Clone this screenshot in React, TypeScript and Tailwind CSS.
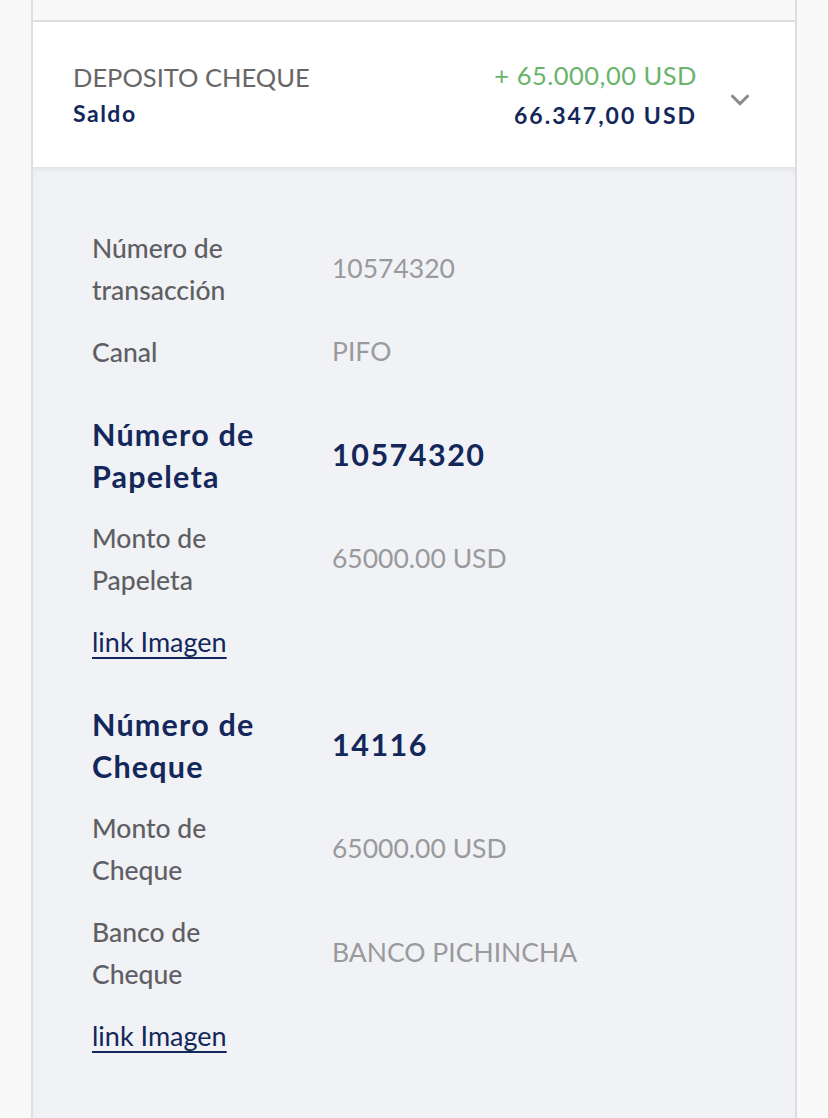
import { ChevronDown } from "lucide-react";

type Row = {
  label: string[];
  value: string;
  strong?: boolean;
  link?: boolean;
};

const rows: Row[] = [
  { label: ["Número de", "transacción"], value: "10574320" },
  { label: ["Canal"], value: "PIFO" },
  { label: ["Número de", "Papeleta"], value: "10574320", strong: true },
  { label: ["Monto de", "Papeleta"], value: "65000.00 USD" },
  { label: ["link Imagen"], value: "", link: true },
  { label: ["Número de", "Cheque"], value: "14116", strong: true },
  { label: ["Monto de", "Cheque"], value: "65000.00 USD" },
  { label: ["Banco de", "Cheque"], value: "BANCO PICHINCHA" },
  { label: ["link Imagen"], value: "", link: true },
];

export default function App() {
  return (
    <div className="min-h-[1118px] bg-[#f9f9f9] font-['Lato','Liberation_Sans',sans-serif]">
      <div className="mx-[31px] flex min-h-[1118px] flex-col border-x-2 border-[#dedede]">
        {/* previous item, cut off */}
        <div className="h-[22px] border-b-2 border-[#dedede] bg-[#f9f9f9]" />

        {/* header */}
        <div className="flex h-[145px] items-center bg-white pl-[40px] pr-[40px]">
          <div className="flex-1">
            <div className="text-[25.5px] leading-[36px] text-[#666666]">DEPOSITO CHEQUE</div>
            <div className="text-[23px] font-bold leading-[36px] tracking-[1.5px] text-[#13275a]">Saldo</div>
          </div>
          <div className="text-right">
            <div className="text-[25.5px] leading-[36px] tracking-[0.5px] text-[#68b46a]">+ 65.000,00 USD</div>
            <div className="mt-[4px] text-[23px] font-bold leading-[36px] tracking-[2px] text-[#13275a]">66.347,00 USD</div>
          </div>
          <ChevronDown className="ml-[28px] mt-[10px] text-[#8a8a8a]" size={30} strokeWidth={2.5} />
        </div>

        {/* details */}
        <div className="flex-1 bg-[#f0f2f6] pl-[59px] pr-[40px] pt-[60px] pb-[40px] shadow-[inset_0_6px_8px_-6px_rgba(0,0,0,0.12)]">
          {rows.map((row, i) => (
            <div
              key={i}
              className={`flex items-center ${i === 0 ? "" : row.strong ? "mt-[40px]" : "mt-[20px]"}`}
            >
              {row.link ? (
                <a href="#" className="text-[27px] leading-[42px] text-[#13275a] underline decoration-2 underline-offset-[5px]">
                  {row.label[0]}
                </a>
              ) : (
                <>
                  <div
                    className={`w-[240px] shrink-0 leading-[42px] ${
                      row.strong
                        ? "text-[30.5px] font-bold tracking-[1.2px] text-[#13275a]"
                        : "text-[26.5px] font-medium text-[#5f5f63]"
                    }`}
                  >
                    {row.label.map((l) => (
                      <div key={l}>{l}</div>
                    ))}
                  </div>
                  <div
                    className={
                      row.strong
                        ? "text-[30.5px] font-bold tracking-[1.5px] text-[#13275a]"
                        : "text-[26.5px] text-[#9a9a9c]"
                    }
                  >
                    {row.value}
                  </div>
                </>
              )}
            </div>
          ))}
        </div>
      </div>
    </div>
  );
}
